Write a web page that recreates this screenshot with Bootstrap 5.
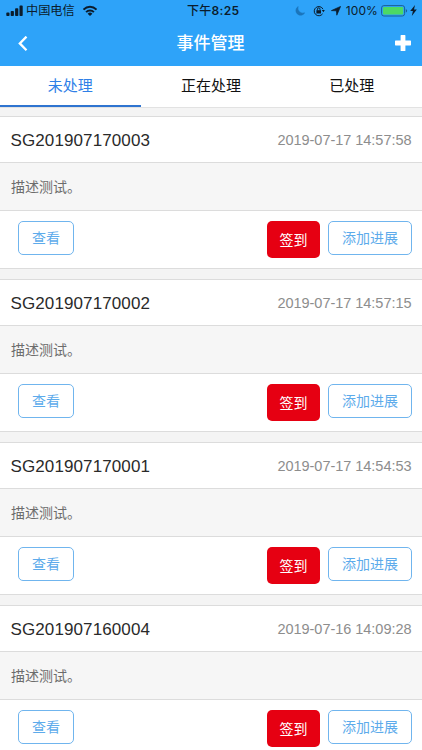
<!DOCTYPE html>
<html lang="zh-CN">
<head>
<meta charset="utf-8">
<meta name="viewport" content="width=device-width, initial-scale=1">
<title>事件管理</title>
<link href="https://cdn.jsdelivr.net/npm/bootstrap@5.3.0/dist/css/bootstrap.min.css" rel="stylesheet">
<style>
body{font-family:"Liberation Sans","Noto Sans CJK SC",sans-serif;background:#f4f4f4;height:750px;overflow:hidden;color:#222}
svg{display:block;flex:none}
.topbar{background:#2ea3f9;height:66px}
.statusbar{height:21px;font-size:12.2px;line-height:21px;color:#0b1c2c;padding:0 5px 0 6px}
.statusbar .clock{font-family:Inter,"Noto Sans CJK SC",sans-serif;font-size:12px;font-weight:600;letter-spacing:.3px;left:187px;top:0}
.statusbar .clock span{font-weight:500}
.statusbar .pct{font-family:Inter,sans-serif;font-size:12px;letter-spacing:.1px;margin-left:5px}
.carrier{margin:1px 8px 0 2px}
.loc{margin-left:6px}
.bat{margin-left:3px}
.bolt{margin-left:2px}
.titlebar{height:45px;padding:0 11px 0 18px}
.titlebar h1{font-size:17px;line-height:45px;font-weight:500;margin-right:2px}
.tabs{height:42px;border-bottom:1px solid #e2e2e2}
.tabs a{font-size:15px;line-height:39px;height:41px;color:#111;border-bottom:2px solid transparent}
.tabs a.active{color:#2f80e7;border-color:#2f74d0}
.list{gap:10px;padding-top:8px}
.event{border-top:1px solid #dcdcdc;border-bottom:1px solid #dcdcdc;height:153px}
.event-head{height:45px;padding:2px 10.5px 0}
.event-id{font-size:17px;letter-spacing:.11px;color:#2a2a2a}
.event-time{font-size:14.5px;color:#8d8d8d;letter-spacing:-.03px}
.event-body{height:49px;background:#f6f6f6;border-top:1px solid #dcdcdc;border-bottom:1px solid #dcdcdc;padding:0 11px;font-size:14px;line-height:48px;color:#6c6c6c}
.event-foot{height:57px;padding:10px 10px 0 18px}
.event-foot .btn{font-size:14px;padding:0;height:34px;line-height:33px;border-radius:5px}
.btn-line{border:1px solid #70b5ee;color:#5dabeb;background:#fff}
.w-view{width:56px}
.w-add{width:84px}
.event-foot .btn-sign{width:53px;height:37px;line-height:36px;background:#e60012;color:#fff;border:0}
</style>
<script src="https://cdn.jsdelivr.net/npm/bootstrap@5.3.0/dist/js/bootstrap.bundle.min.js"></script>
</head>
<body>
<header class="topbar">
  <div class="statusbar d-flex align-items-center justify-content-between position-relative">
    <div class="d-flex align-items-center">
      <svg width="18" height="12" viewBox="0 0 18 12" fill="#0b1c2c"><rect x=".3" y="7.6" width="3.2" height="3.4" rx=".8"/><rect x="4.7" y="6" width="3.2" height="5" rx=".8"/><rect x="9.1" y="3.3" width="3.2" height="7.7" rx=".8"/><rect x="13.5" y=".6" width="3.2" height="10.4" rx=".8"/></svg>
      <span class="carrier">中国电信</span>
      <svg width="14" height="12" viewBox="0.5 0 14 12" fill="none" stroke="#0b1c2c" stroke-width="2"><path d="M1 4.6C4.6 .8 10.4 .8 14 4.6M3.6 7.1c2.2-2.3 5.6-2.3 7.8 0"/><path d="M5.1 8.7a3.4 3.4 0 0 1 4.8 0L7.5 11.1z" fill="#0b1c2c" stroke="none"/></svg>
    </div>
    <div class="clock position-absolute"><span>下午</span>8:25</div>
    <div class="d-flex align-items-center">
      <svg width="10" height="10" viewBox="0 0 10 10"><path d="M3.2.5A4.7 4.7 0 1 0 9.7 6.8 5 5 0 0 1 3.2.5z" fill="#1b75bb" stroke="#1b75bb" stroke-width=".5"/></svg>
      <svg class="ms-2" width="12" height="12" viewBox="0 0 12 12" fill="none" stroke="#0b1c2c"><path d="M9.6 8.8A4.6 4.6 0 1 1 10 4.2"/><path d="M8.8 5.1h3L10.4 7.2z" fill="#0b1c2c" stroke="none"/><rect x="3.4" y="5.2" width="4.6" height="3.3" fill="#0b1c2c" stroke="none"/><path d="M4.4 5.3V4.2a1.3 1.3 0 0 1 2.6 0v1.1"/></svg>
      <svg class="loc" width="10" height="10" viewBox="0 0 10 10"><path d="M9.6.4 5.8 9.2 5.4 4.8.4 4.6z" fill="#0b1c2c" stroke="#0b1c2c" stroke-width=".7" stroke-linejoin="round"/></svg>
      <span class="pct">100%</span>
      <svg class="bat" width="27" height="12" viewBox="0 0 27 12"><rect x=".6" y=".6" width="23" height="10.4" rx="2.3" fill="none" stroke="#1b6096"/><rect x="2" y="2" width="20.2" height="7.6" rx="1" fill="#4cd964"/><path d="M24.8 4v3.6q1.3-.4 1.3-1.8T24.8 4" fill="#1b6096"/></svg>
      <svg class="bolt" width="7" height="11" viewBox="0 0 7 11"><path d="M5 0 .2 6h2.7L1.8 11 6.8 4.6H4z" fill="#0b1c2c"/></svg>
    </div>
  </div>
  <div class="titlebar d-flex align-items-center justify-content-between text-white">
    <svg width="10" height="16" viewBox="0 1 10 16" fill="none" stroke="#fff" stroke-width="2.3"><path d="M8.5 1.6 1.8 8.4l6.7 6.8"/></svg>
    <h1 class="mb-0">事件管理</h1>
    <svg width="16" height="16" viewBox="0 1 16 16" overflow="visible" fill="#fff"><path d="M5.6 .6Q5.6 0 6.2 0h3.6q.6 0 .6.6v5h5q.6 0 .6.6v3.6q0 .6-.6.6h-5v5q0 .6-.6.6H6.2q-.6 0-.6-.6v-5h-5Q0 10.4 0 9.8V6.2q0-.6.6-.6h5z"/></svg>
  </div>
</header>
<nav class="tabs d-flex bg-white text-center">
  <a class="active col-4 text-decoration-none" href="#">未处理</a>
  <a class="col-4 text-decoration-none" href="#">正在处理</a>
  <a class="col-4 text-decoration-none" href="#">已处理</a>
</nav>
<main class="list d-flex flex-column">
  <section class="event bg-white flex-shrink-0">
    <div class="event-head d-flex align-items-center justify-content-between"><span class="event-id">SG201907170003</span><span class="event-time">2019-07-17 14:57:58</span></div>
    <div class="event-body">描述测试。</div>
    <div class="event-foot d-flex align-items-start"><button class="btn btn-line w-view me-auto">查看</button><button class="btn btn-sign me-2">签到</button><button class="btn btn-line w-add">添加进展</button></div>
  </section>
  <section class="event bg-white flex-shrink-0">
    <div class="event-head d-flex align-items-center justify-content-between"><span class="event-id">SG201907170002</span><span class="event-time">2019-07-17 14:57:15</span></div>
    <div class="event-body">描述测试。</div>
    <div class="event-foot d-flex align-items-start"><button class="btn btn-line w-view me-auto">查看</button><button class="btn btn-sign me-2">签到</button><button class="btn btn-line w-add">添加进展</button></div>
  </section>
  <section class="event bg-white flex-shrink-0">
    <div class="event-head d-flex align-items-center justify-content-between"><span class="event-id">SG201907170001</span><span class="event-time">2019-07-17 14:54:53</span></div>
    <div class="event-body">描述测试。</div>
    <div class="event-foot d-flex align-items-start"><button class="btn btn-line w-view me-auto">查看</button><button class="btn btn-sign me-2">签到</button><button class="btn btn-line w-add">添加进展</button></div>
  </section>
  <section class="event bg-white flex-shrink-0">
    <div class="event-head d-flex align-items-center justify-content-between"><span class="event-id">SG201907160004</span><span class="event-time">2019-07-16 14:09:28</span></div>
    <div class="event-body">描述测试。</div>
    <div class="event-foot d-flex align-items-start"><button class="btn btn-line w-view me-auto">查看</button><button class="btn btn-sign me-2">签到</button><button class="btn btn-line w-add">添加进展</button></div>
  </section>
</main>
</body>
</html>
